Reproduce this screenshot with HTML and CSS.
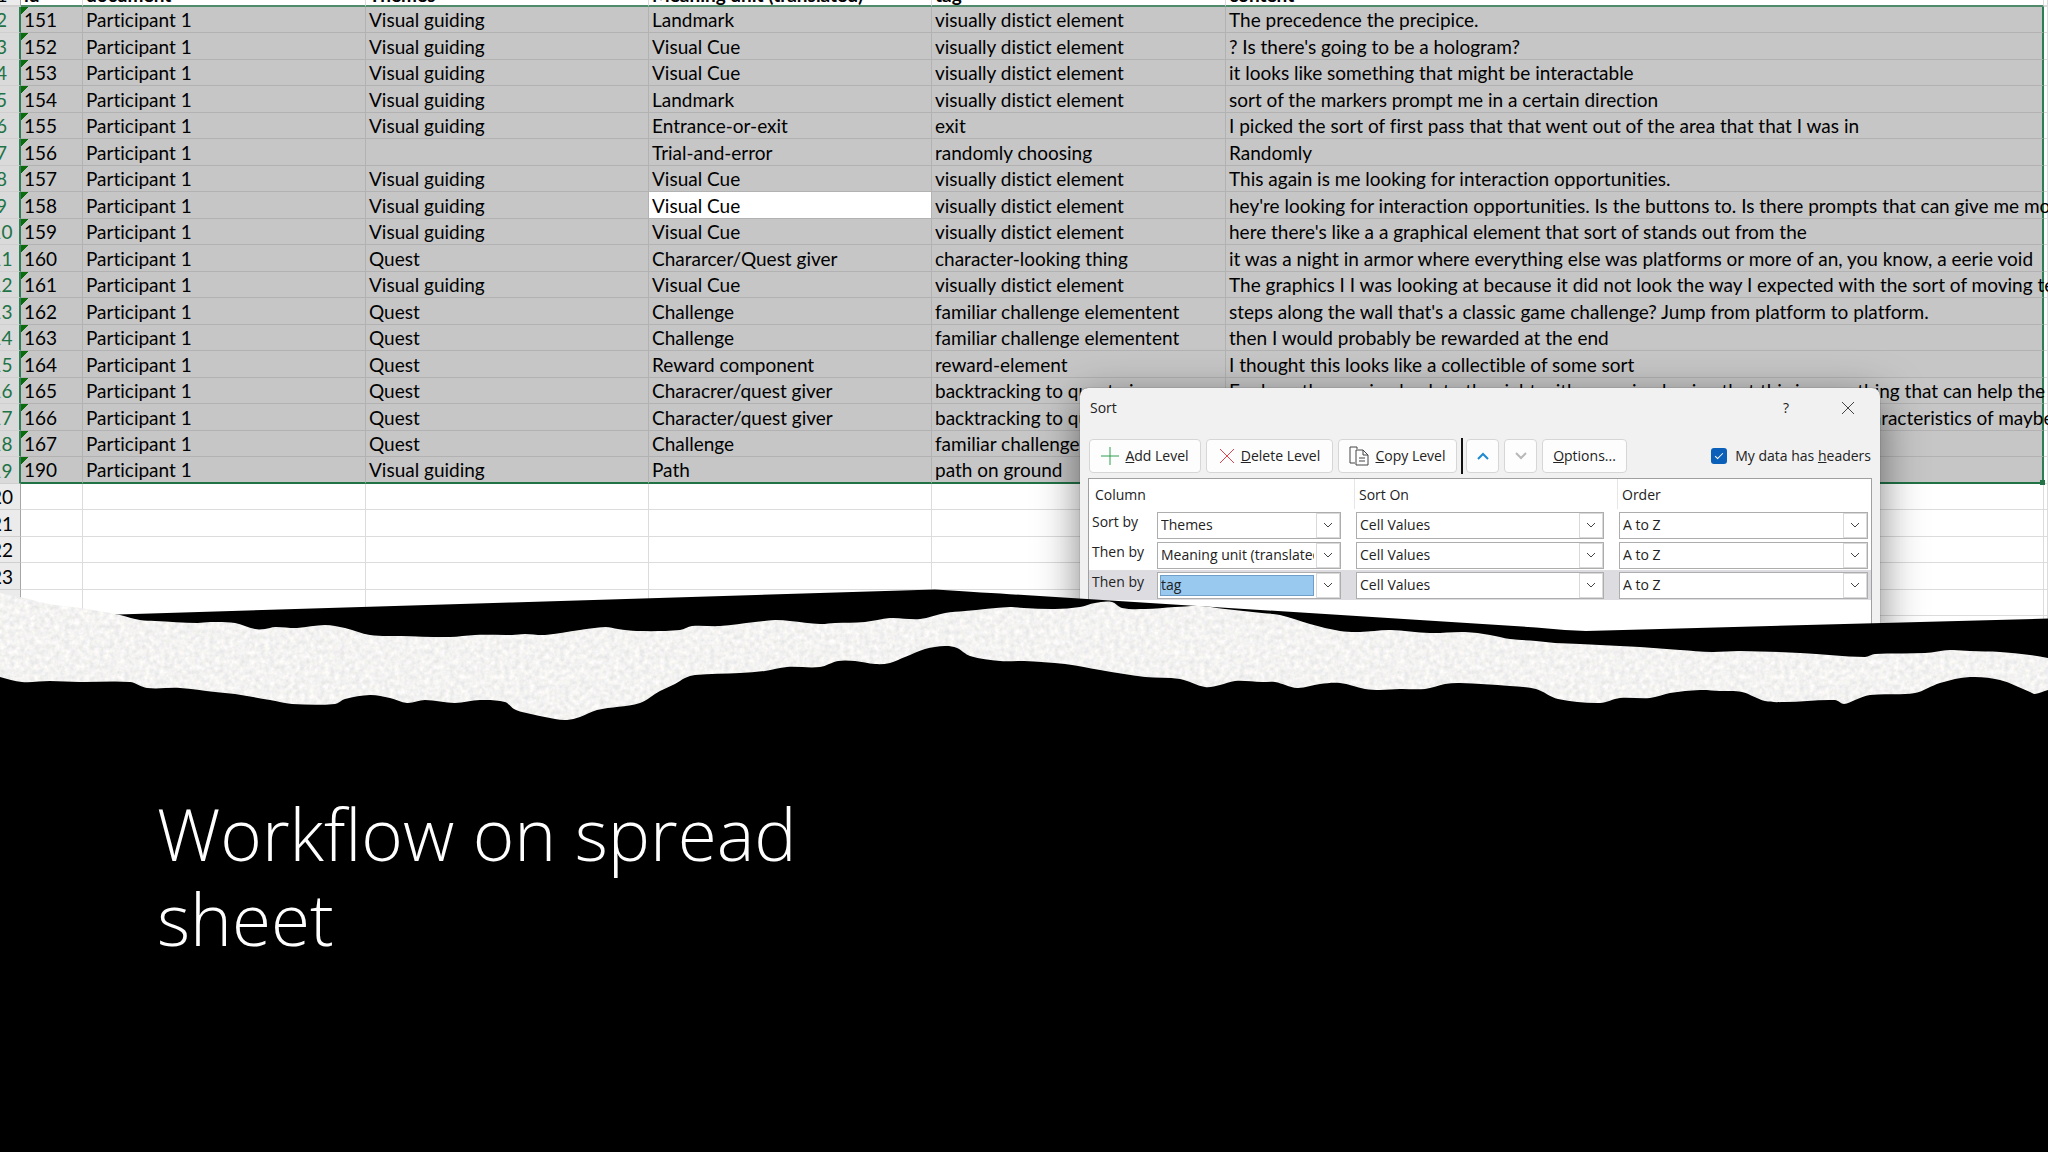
FILE: index.html
```html
<!DOCTYPE html>
<html lang="en">
<head>
  <meta charset="UTF-8">
  <meta name="viewport" content="width=device-width, initial-scale=1.0">
  <title>Workflow on spread sheet</title>
  <link rel="stylesheet" href="styles.css">
</head>
<body>
  <div class="sheet">
    <table class="grid">
      <colgroup>
        <col class="col-num"><col class="col-id"><col class="col-text"><col class="col-text"><col class="col-text"><col class="col-tag"><col><col class="col-rest">
      </colgroup>
      <thead>
        <tr><th class="num">1</th><th>id</th><th>document</th><th>Themes</th><th>Meaning unit (translated)</th><th>tag</th><th>content</th><th class="rest"></th></tr>
      </thead>
      <tbody class="selected">
        <tr><th class="num">2</th><td class="id">151</td><td>Participant 1</td><td>Visual guiding</td><td>Landmark</td><td>visually distict element</td><td>The precedence the precipice.</td><td class="rest"></td></tr>
        <tr><th class="num">3</th><td class="id">152</td><td>Participant 1</td><td>Visual guiding</td><td>Visual Cue</td><td>visually distict element</td><td>? Is there's going to be a hologram?</td><td class="rest"></td></tr>
        <tr><th class="num">4</th><td class="id">153</td><td>Participant 1</td><td>Visual guiding</td><td>Visual Cue</td><td>visually distict element</td><td>it looks like something that might be interactable</td><td class="rest"></td></tr>
        <tr><th class="num">5</th><td class="id">154</td><td>Participant 1</td><td>Visual guiding</td><td>Landmark</td><td>visually distict element</td><td>sort of the markers prompt me in a certain direction</td><td class="rest"></td></tr>
        <tr><th class="num">6</th><td class="id">155</td><td>Participant 1</td><td>Visual guiding</td><td>Entrance-or-exit</td><td>exit</td><td>I picked the sort of first pass that that went out of the area that that I was in</td><td class="rest"></td></tr>
        <tr><th class="num">7</th><td class="id">156</td><td>Participant 1</td><td></td><td>Trial-and-error</td><td>randomly choosing</td><td>Randomly</td><td class="rest"></td></tr>
        <tr><th class="num">8</th><td class="id">157</td><td>Participant 1</td><td>Visual guiding</td><td>Visual Cue</td><td>visually distict element</td><td>This again is me looking for interaction opportunities.</td><td class="rest"></td></tr>
        <tr><th class="num">9</th><td class="id">158</td><td>Participant 1</td><td>Visual guiding</td><td class="active">Visual Cue</td><td>visually distict element</td><td>hey're looking for interaction opportunities. Is the buttons to. Is there prompts that can give me more</td><td class="rest"></td></tr>
        <tr><th class="num">10</th><td class="id">159</td><td>Participant 1</td><td>Visual guiding</td><td>Visual Cue</td><td>visually distict element</td><td>here there's like a a graphical element that sort of stands out from the</td><td class="rest"></td></tr>
        <tr><th class="num">11</th><td class="id">160</td><td>Participant 1</td><td>Quest</td><td>Chararcer/Quest giver</td><td>character-looking thing</td><td>it was a night in armor where everything else was platforms or more of an, you know, a eerie void</td><td class="rest"></td></tr>
        <tr><th class="num">12</th><td class="id">161</td><td>Participant 1</td><td>Visual guiding</td><td>Visual Cue</td><td>visually distict element</td><td>The graphics I I was looking at because it did not look the way I expected with the sort of moving texture</td><td class="rest"></td></tr>
        <tr><th class="num">13</th><td class="id">162</td><td>Participant 1</td><td>Quest</td><td>Challenge</td><td>familiar challenge elementent</td><td>steps along the wall that's a classic game challenge? Jump from platform to platform.</td><td class="rest"></td></tr>
        <tr><th class="num">14</th><td class="id">163</td><td>Participant 1</td><td>Quest</td><td>Challenge</td><td>familiar challenge elementent</td><td>then I would probably be rewarded at the end</td><td class="rest"></td></tr>
        <tr><th class="num">15</th><td class="id">164</td><td>Participant 1</td><td>Quest</td><td>Reward component</td><td>reward-element</td><td>I thought this looks like a collectible of some sort</td><td class="rest"></td></tr>
        <tr><th class="num">16</th><td class="id">165</td><td>Participant 1</td><td>Quest</td><td>Characrer/quest giver</td><td>backtracking to quest giver</td><td>For how the coming back to the right with a coming having that this is something that can help the hero</td><td class="rest"></td></tr>
        <tr><th class="num">17</th><td class="id">166</td><td>Participant 1</td><td>Quest</td><td>Character/quest giver</td><td>backtracking to quest giver</td><td>and that it is the one in the area because of the way it has the same sort of characteristics of maybe</td><td class="rest"></td></tr>
        <tr><th class="num">18</th><td class="id">167</td><td>Participant 1</td><td>Quest</td><td>Challenge</td><td>familiar challenge</td><td></td><td class="rest"></td></tr>
        <tr><th class="num">19</th><td class="id">190</td><td>Participant 1</td><td>Visual guiding</td><td>Path</td><td>path on ground</td><td class="corner"></td><td class="rest"></td></tr>
      </tbody>
      <tbody>
        <tr><th class="num">20</th><td></td><td></td><td></td><td></td><td></td><td></td><td></td></tr>
        <tr><th class="num">21</th><td></td><td></td><td></td><td></td><td></td><td></td><td></td></tr>
        <tr><th class="num">22</th><td></td><td></td><td></td><td></td><td></td><td></td><td></td></tr>
        <tr><th class="num">23</th><td></td><td></td><td></td><td></td><td></td><td></td><td></td></tr>
        <tr><th class="num"></th><td></td><td></td><td></td><td></td><td></td><td></td><td></td></tr>
        <tr><th class="num"></th><td></td><td></td><td></td><td></td><td></td><td></td><td></td></tr>
      </tbody>
    </table>

    <div class="dialog" role="dialog" aria-labelledby="sort-title">
      <div class="titlebar">
        <span id="sort-title">Sort</span>
        <button class="title-btn" aria-label="Help">?</button>
        <button class="title-btn" aria-label="Close"><svg width="14" height="14" viewBox="0 0 14 14"><path d="M1 1l12 12M13 1L1 13"/></svg></button>
      </div>
      <div class="toolbar">
        <button class="btn btn-add"><svg width="18" height="18" viewBox="0 0 18 18" class="green"><path d="M9 0v18M0 9h18"/></svg><span><u>A</u>dd Level</span></button>
        <button class="btn btn-delete"><svg width="16" height="16" viewBox="0 0 16 16" class="red"><path d="M1 1l14 14M15 1L1 15"/></svg><span><u>D</u>elete Level</span></button>
        <button class="btn btn-copy"><svg width="20" height="20" viewBox="0 0 20 20"><path d="M6 17H1V1h7v2M7 4h7l5 5v10H7zM14 4v5h5M10 12h6M10 15h6"/></svg><span><u>C</u>opy Level</span></button>
        <span class="bar"></span>
        <button class="btn btn-move" aria-label="Move up"><svg width="12" height="8" viewBox="0 0 12 8" class="blue"><path d="M1 7l5-5 5 5"/></svg></button>
        <button class="btn btn-move" aria-label="Move down" disabled><svg width="12" height="8" viewBox="0 0 12 8" class="pale"><path d="M1 1l5 5 5-5"/></svg></button>
        <button class="btn btn-options"><span><u>O</u>ptions...</span></button>
        <label class="headers"><input type="checkbox" checked><span>My data has <u>h</u>eaders</span></label>
      </div>
      <div class="levels">
        <div class="level-head"><span>Column</span><span>Sort On</span><span>Order</span></div>
        <div class="level">
          <label for="column-1">Sort by</label>
          <div class="combo"><select id="column-1"><option>Themes</option></select><span class="arrow"><svg width="10" height="6" viewBox="0 0 10 6"><path d="M1 1l4 4 4-4"/></svg></span></div>
          <div class="combo"><select aria-label="Sort on"><option>Cell Values</option></select><span class="arrow"><svg width="10" height="6" viewBox="0 0 10 6"><path d="M1 1l4 4 4-4"/></svg></span></div>
          <div class="combo"><select aria-label="Order"><option>A to Z</option></select><span class="arrow"><svg width="10" height="6" viewBox="0 0 10 6"><path d="M1 1l4 4 4-4"/></svg></span></div>
        </div>
        <div class="level">
          <label for="column-2">Then by</label>
          <div class="combo"><select id="column-2"><option>Meaning unit (translated)</option></select><span class="arrow"><svg width="10" height="6" viewBox="0 0 10 6"><path d="M1 1l4 4 4-4"/></svg></span></div>
          <div class="combo"><select aria-label="Sort on"><option>Cell Values</option></select><span class="arrow"><svg width="10" height="6" viewBox="0 0 10 6"><path d="M1 1l4 4 4-4"/></svg></span></div>
          <div class="combo"><select aria-label="Order"><option>A to Z</option></select><span class="arrow"><svg width="10" height="6" viewBox="0 0 10 6"><path d="M1 1l4 4 4-4"/></svg></span></div>
        </div>
        <div class="level current">
          <label for="column-3">Then by</label>
          <div class="combo picked"><select id="column-3"><option>tag</option></select><span class="arrow"><svg width="10" height="6" viewBox="0 0 10 6"><path d="M1 1l4 4 4-4"/></svg></span></div>
          <div class="combo"><select aria-label="Sort on"><option>Cell Values</option></select><span class="arrow"><svg width="10" height="6" viewBox="0 0 10 6"><path d="M1 1l4 4 4-4"/></svg></span></div>
          <div class="combo"><select aria-label="Order"><option>A to Z</option></select><span class="arrow"><svg width="10" height="6" viewBox="0 0 10 6"><path d="M1 1l4 4 4-4"/></svg></span></div>
        </div>
      </div>
    </div>
  </div>

  <svg class="torn" viewBox="0 580 2048 150" preserveAspectRatio="none" aria-hidden="true">
    <defs>
      <filter id="grain" x="0" y="0" width="100%" height="100%" color-interpolation-filters="sRGB">
        <feTurbulence type="fractalNoise" baseFrequency="0.2" numOctaves="3" seed="4"/>
        <feColorMatrix values="0.16 0 0 0 0.875  0.14 0.02 0 0 0.872  0.12 0 0.04 0 0.868  0 0 0 0 1"/>
        <feComposite in2="SourceGraphic" operator="in"/>
      </filter>
    </defs>
    <path d="M0 606L118 614.500L512 602.500L935 589.500Q990 593 1024 595L1536 627.500Q1560 630 1586 631L2048 618.500V730H0z"/>
    <path id="paper" fill="#f4f4f3" filter="url(#grain)"/>
  </svg>

  <h1>Workflow on spread sheet</h1>

  <script>
    // Edges of the paper strip, x and y pairs, left to right
    const top_edge = [
      0,593, 20,597, 50,604, 80,608, 105,612, 120,615, 140,620, 155,621, 197,623, 210,622, 235,623, 255,629, 265,629, 275,627, 297,628, 325,625, 345,628, 370,635, 400,636, 450,637, 475,635, 512,635,
      525,634, 545,635, 580,630, 605,627, 618,629, 637,631, 680,630, 692,626, 720,626, 755,622, 775,620, 790,621, 820,624, 835,623, 865,622, 890,618, 920,619, 945,613, 965,611, 1010,607,
      1024,608, 1055,609, 1080,607, 1095,603, 1112,602, 1122,608, 1145,609, 1175,607, 1200,606, 1225,609, 1262,613, 1280,615, 1310,624, 1340,631, 1360,632, 1390,630, 1430,633, 1465,632, 1490,635, 1510,639,
      1536,641, 1555,643, 1580,644, 1620,646, 1640,647, 1680,650, 1712,652, 1740,651, 1800,653, 1865,657, 1875,654, 1925,653, 1950,650, 1970,651, 2000,652, 2030,655, 2048,658
    ];
    const bottom_edge = [
      0,677, 22,682, 50,681, 80,682, 130,682, 147,688, 180,688, 215,692, 235,694, 270,700, 292,704, 335,704, 345,699, 370,695, 390,698, 407,703, 425,700, 455,703, 480,700, 505,702,
      514,709, 522,712, 555,719, 567,720, 580,717, 597,710, 640,703, 660,691, 675,684, 685,678, 695,675, 740,673, 765,671, 787,667, 820,667, 838,661, 855,661, 875,664, 890,663, 905,657, 925,649, 945,646, 957,648, 970,656, 1000,661,
      1024,661, 1065,664, 1100,670, 1145,677, 1180,679, 1205,687, 1220,685, 1235,681, 1262,682, 1275,682, 1297,688, 1320,684, 1340,683, 1365,689, 1380,690, 1400,689, 1425,689, 1445,684, 1460,683, 1510,686,
      1536,689, 1558,699, 1600,703, 1620,698, 1650,698, 1670,693, 1700,690, 1720,691, 1742,692, 1765,701, 1785,702, 1835,700, 1844,704, 1855,700, 1870,695, 1915,693, 1940,683, 1970,677, 2000,680, 2030,692, 2035,694, 2048,690
    ];

    function pairs(list) {
      const points = [];
      for (let i = 0; i < list.length; i += 2) points.push([list[i], list[i + 1]]);
      return points;
    }

    // Smooth curve through all the points
    function curve(points) {
      let d = '';
      for (let i = 0; i < points.length - 1; i++) {
        const a = points[i], b = points[i + 1];
        const before = points[i - 1] || a, after = points[i + 2] || b;
        const third = (b[0] - a[0]) / 3;
        const slopeA = (b[1] - before[1]) / (b[0] - before[0]);
        const slopeB = (after[1] - a[1]) / (after[0] - a[0]);
        d += `C${a[0] + third} ${a[1] + slopeA * third} ${b[0] - third} ${b[1] - slopeB * third} ${b[0]} ${b[1]}`;
      }
      return d;
    }

    const upper = pairs(top_edge);
    const lower = pairs(bottom_edge).reverse();
    document.getElementById('paper').setAttribute('d', `M${upper[0]}${curve(upper)}L${lower[0]}${curve(lower)}z`);
  </script>
</body>
</html>
```
FILE: styles.css
```css
body {
  margin: 0;
  background: #000;
  color: #000;
  overflow: hidden;
}

/* Spreadsheet */
.sheet {
  position: relative;
  overflow: hidden;
  background: #fff;
}
.grid {
  width: calc(100% + 16px);
  margin: -19px 0 0 -16px;
  table-layout: fixed;
  border-collapse: separate;
  border-spacing: 0;
  font: 19px/24px Lato, sans-serif;
  font-variant-ligatures: none;
}
.col-num { width: 37px; }
.col-id { width: 62px; }
.col-text { width: 283px; }
.col-tag { width: 294px; }
.col-rest { width: 4px; }
.grid th,
.grid td {
  box-sizing: border-box;
  height: 26px;
  padding: 1px 0 0 3px;
  border-right: 1px solid #dcdcdc;
  border-bottom: 1px solid #dcdcdc;
  text-align: left;
  white-space: nowrap;
}
.grid tbody tr:nth-child(even) > * {
  height: 27px;
}
.grid thead th {
  padding-top: 4px;
  border-bottom: 2px solid #4f8a6b;
  line-height: 20px;
  vertical-align: bottom;
}
.grid .num {
  padding-left: 0;
  background: #ebebeb;
  border-right-color: #a6a6a6;
  border-bottom-color: #cfcfcf;
  font-weight: normal;
  text-align: center;
}
.grid .selected td {
  background: #c6c6c6;
  border-color: #b2b2b2;
}
.grid .selected .num {
  background: #dadada;
  border-right: 2px solid #2f7d56;
  color: #217346;
}
.grid .selected .active {
  background: #fff;
}
.grid .selected td:nth-last-child(2) {
  border-right: 2px solid #2f7d56;
}
.grid .selected .rest,
.grid thead .rest {
  background: none;
  border-color: #dcdcdc;
}
.grid .selected tr:last-child td:not(.rest) {
  border-bottom: 2px solid #217346;
}
.grid .selected .id {
  background-image: linear-gradient(135deg, #0c6b0c 5px, transparent 5px);
}
.corner {
  position: relative;
}
.corner::after {
  content: "";
  position: absolute;
  right: -3px;
  bottom: -3px;
  width: 5px;
  height: 5px;
  background: #217346;
}

/* Sort dialog */
.dialog {
  position: absolute;
  top: 388px;
  right: 168px;
  width: 800px;
  height: 280px;
  box-sizing: border-box;
  padding: 0 8px;
  border-radius: 8px;
  background: #f1f1f1;
  box-shadow: 0 0 1px rgba(0, 0, 0, 0.7), 0 12px 44px rgba(0, 0, 0, 0.5);
  font: 14px/20px "Open Sans", sans-serif;
  color: #222;
}
.dialog button,
.dialog select {
  font: inherit;
  color: inherit;
}
.dialog svg {
  fill: none;
  stroke: #444;
}
.dialog svg.green { stroke: #2e9e4f; }
.dialog svg.red { stroke: #e0434f; }
.dialog svg.blue { stroke: #1e88d2; stroke-width: 2; }
.dialog svg.pale { stroke: #b8b8b8; stroke-width: 2; }
.titlebar {
  display: flex;
  align-items: center;
  height: 40px;
  padding: 0 8px 0 2px;
}
.titlebar span {
  flex: 1;
}
.title-btn {
  width: 32px;
  margin-left: 30px;
  padding: 0;
  border: 0;
  background: none;
}
.title-btn svg {
  display: block;
  margin: 0 auto;
}
.toolbar {
  display: flex;
  align-items: center;
  gap: 5px;
  height: 50px;
  padding: 5px 1px 0;
  box-sizing: border-box;
}
.btn {
  display: flex;
  align-items: center;
  justify-content: center;
  gap: 6px;
  height: 34px;
  box-sizing: border-box;
  padding: 0;
  border: 1px solid #d6d6d6;
  border-radius: 4px;
  background: #fdfdfd;
  white-space: nowrap;
}
.btn-add { width: 112px; }
.btn-delete { width: 127px; }
.btn-copy { width: 119px; }
.btn-move { width: 33px; }
.btn-options { width: 85px; }
.bar {
  width: 2px;
  height: 36px;
  margin: 0 -2px 0 -1px;
  background: #111;
}
.headers {
  display: flex;
  align-items: center;
  gap: 8px;
  margin-left: auto;
}
.headers input {
  appearance: none;
  position: relative;
  width: 16px;
  height: 16px;
  margin: 0;
  border-radius: 3px;
  background: #0a5fb8;
}
.headers input::after {
  content: "";
  position: absolute;
  left: 4px;
  top: 5px;
  width: 7px;
  height: 3px;
  border-left: 1px solid #fff;
  border-bottom: 1px solid #fff;
  transform: rotate(-45deg);
}
.levels {
  height: 200px;
  border: 1px solid #a0a0a0;
  background: #fff;
}
.level-head,
.level {
  display: grid;
  grid-template-columns: 53px 184px 248px 1fr;
  column-gap: 15px;
}
.level-head {
  grid-template-columns: 250px 248px 1fr;
  height: 31px;
  line-height: 32px;
}
.level-head span {
  padding-left: 6px;
}
.level-head span + span {
  height: 30px;
  padding-left: 4px;
  border-left: 1px solid #e6e6e6;
}
.level {
  height: 30px;
  padding-right: 3px;
  align-items: center;
}
.level label {
  margin-right: -15px;
  padding: 0 0 6px 3px;
}
.level.current {
  background: #dcdce1;
}
.combo {
  position: relative;
  height: 27px;
  box-sizing: border-box;
  border: 1px solid #adadad;
  background: #fff;
}
.combo select {
  appearance: none;
  display: block;
  width: 100%;
  height: 25px;
  margin: 0;
  padding: 0 26px 0 3px;
  border: 0;
  border-radius: 0;
  background: none;
  overflow: hidden;
}
.combo.picked select {
  width: calc(100% - 28px);
  height: 21px;
  margin: 2px;
  padding: 0 0 0 1px;
  background: #99c9ef;
  outline: 1px solid #6f9fc8;
  outline-offset: -1px;
}
.arrow {
  position: absolute;
  top: 0;
  right: 0;
  display: flex;
  align-items: center;
  justify-content: center;
  width: 24px;
  height: 25px;
  box-sizing: border-box;
  border: 1px solid #d9d9d9;
  pointer-events: none;
}

/* Torn paper strip */
.torn {
  position: relative;
  z-index: 1;
  display: block;
  width: 100%;
  height: 150px;
  margin-top: -63px;
}

/* Slide title */
h1 {
  max-width: 700px;
  margin: 61px 0 0 157px;
  color: #fff;
  font: 300 71px/85px "Open Sans", sans-serif;
}
```
